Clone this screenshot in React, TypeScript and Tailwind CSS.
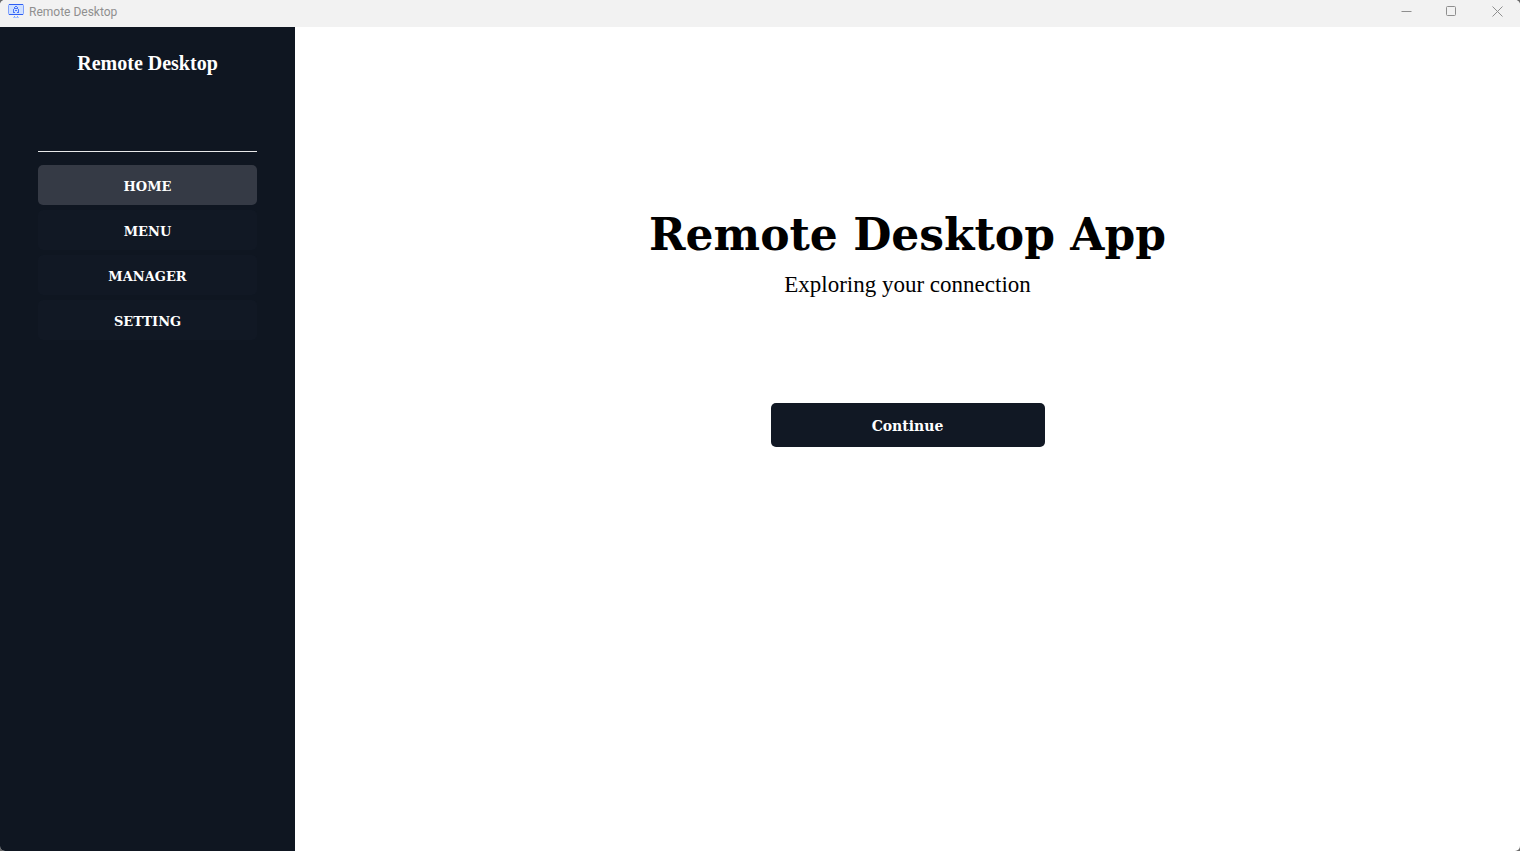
import { useState } from "react";

const pages = ["HOME", "MENU", "MANAGER", "SETTING"];

function AppIcon() {
  return (
    <svg width="16" height="16" viewBox="0 0 16 16" aria-hidden="true">
      <rect x="0.5" y="0.5" width="15" height="10" rx="1" fill="#cfe0ff" stroke="#7fa0fc" />
      <path d="M1 0.5H15M1 10.5H15" stroke="#2f5ff5" />
      <path d="M5.5 5v3M10.5 5v3M6 3.5h1M9 3.5h1M5 8.5h2M9 8.5h2" fill="none" stroke="#4a76f9" />
      <path d="M7 2.5h2M6 4.5h4M7 6.5h2" stroke="#4a76f9" />
      <path d="M6 12.5h1M9 12.5h1" stroke="#7fa0fc" />
      <path d="M5 13.5h6" stroke="#a9c3fd" />
    </svg>
  );
}

function TitleBar() {
  return (
    <header className="flex h-[27px] shrink-0 items-start justify-between bg-[#f2f2f2] pl-2 text-[#8f8f8f]">
      <div className="flex items-center gap-[5px] pt-[3px]">
        <AppIcon />
        <span className="font-['Roboto',sans-serif] text-xs leading-[18px]">Remote Desktop</span>
      </div>
      <div className="flex">
        <button type="button" aria-label="Minimize" className="flex h-[23px] w-[45px] items-center justify-center">
          <svg width="11" height="11" viewBox="0 0 11 11" fill="none" stroke="currentColor">
            <path d="M0.5 5.5h10" />
          </svg>
        </button>
        <button type="button" aria-label="Maximize" className="flex h-[23px] w-[45px] items-center justify-center">
          <svg width="11" height="11" viewBox="0 0 11 11" fill="none" stroke="currentColor">
            <rect x="0.5" y="0.5" width="9" height="9" rx="1" />
          </svg>
        </button>
        <button type="button" aria-label="Close" className="flex h-[23px] w-[46px] items-center justify-center">
          <svg width="11" height="11" viewBox="0 0 11 11" fill="none" stroke="currentColor">
            <path d="M0.5 0.5l10 10M10.5 0.5l-10 10" />
          </svg>
        </button>
      </div>
    </header>
  );
}

export default function App() {
  const [current, setCurrent] = useState("HOME");
  return (
    <div className="bg-[#6a6a6a]">
      <div className="flex min-h-screen flex-col overflow-hidden rounded-[5px] bg-white">
        <TitleBar />
        <div className="flex grow">
          <aside className="w-[295px] shrink-0 bg-[#0f1621] px-[38px] pt-[22px] text-center text-white">
            <h2 className="font-['Liberation_Serif',serif] text-xl leading-7 font-bold">Remote Desktop</h2>
            <hr className="mt-[74px] border-t border-[#e8e9ea]" />
            <nav className="mt-[13px] flex flex-col gap-[5px]">
              {pages.map((page) => (
                <button
                  key={page}
                  type="button"
                  onClick={() => setCurrent(page)}
                  aria-current={page === current ? "page" : undefined}
                  className={
                    "h-10 rounded-[5px] pt-1 font-['DejaVu_Serif',serif] text-[13px] font-bold " +
                    (page === current ? "bg-[#353a45]" : "bg-[#111824]")
                  }
                >
                  {page}
                </button>
              ))}
            </nav>
          </aside>
          <main className="flex grow flex-col items-center pt-[178px] font-['DejaVu_Serif',serif] text-black">
            <h1 className="text-[44px] leading-[60px] font-bold">Remote Desktop App</h1>
            <p className="mt-1.5 font-['Liberation_Serif',serif] text-[23px] leading-7">Exploring your connection</p>
            <button
              type="button"
              className="mt-[104px] h-11 w-[274px] rounded-[5px] bg-[#111824] pt-0.5 text-[14px] font-bold text-white"
            >
              Continue
            </button>
          </main>
        </div>
      </div>
    </div>
  );
}
